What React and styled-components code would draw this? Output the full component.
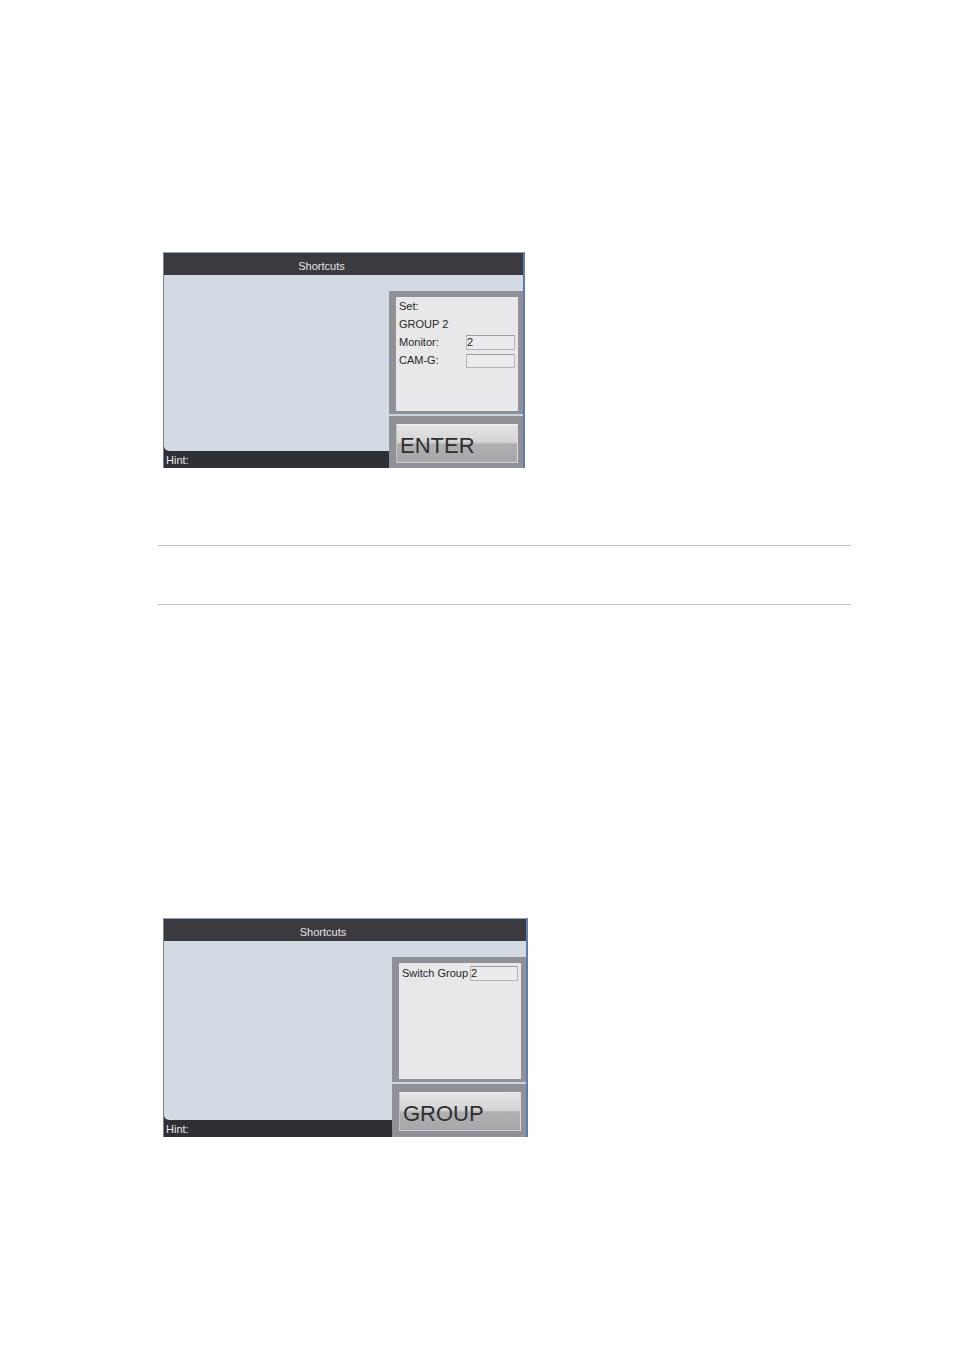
import React from "react";
import styled, { createGlobalStyle } from "styled-components";

const Global = createGlobalStyle`
  html, body { margin: 0; padding: 0; background: #ffffff; }
  body { font-family: "Liberation Sans", Arial, sans-serif; }
  * { box-sizing: border-box; }
`;

const Page = styled.div`
  width: 954px;
  min-height: 1349px;
  padding-top: 252px;
  display: flex;
  flex-direction: column;
`;

const Screen = styled.div`
  margin-left: 163px;
  width: ${(p) => p.$w}px;
  display: flex;
  flex-direction: column;
  border-top: 1px solid #8ea2bf;
  border-right: 2px solid #5d7cb4;
  border-left: 1px solid #7b8595;
  margin-top: ${(p) => p.$mt || 0}px;
`;

const TitleBar = styled.div`
  height: 22px;
  padding: 4px 44px 0 0;
  line-height: 18px;
  background: #3b3b3f;
  color: #e4e4e6;
  font-size: 11px;
  text-align: center;
`;

const Main = styled.div`
  height: ${(p) => p.$h}px;
  display: flex;
  background: #d2dbe3;
`;

const LeftCol = styled.div`
  flex: 1;
  display: flex;
  flex-direction: column;
  background: #2f3035;
`;

const Body = styled.div`
  flex: 1;
  background: #d2dbe3;
  border-bottom-left-radius: 5px;
`;

const HintBar = styled.div`
  height: 17px;
  padding: 2px 0 0 2px;
  line-height: 15px;
  color: #e8e8ea;
  font-size: 11px;
`;

const RightCol = styled.div`
  width: 134px;
  padding-top: 16px;
  display: flex;
  flex-direction: column;
`;

const Frame = styled.div`
  flex: 1;
  background: #909196;
  padding: 6px 5px 3px 7px;
  display: flex;
  flex-direction: column;
`;

const InfoPanel = styled.div`
  flex: 1;
  background: #e8e7e9;
  padding: ${(p) => p.$pt}px 3px 0 3px;
  color: #262626;
  font-size: 11px;
`;

const Row = styled.div`
  height: 18px;
  line-height: 18px;
  display: flex;
  align-items: center;
  white-space: nowrap;
`;

const Label = styled.span`
  width: ${(p) => (p.$w ? `${p.$w}px` : "auto")};
  flex: none;
`;

const Field = styled.div`
  width: ${(p) => p.$w}px;
  height: ${(p) => p.$h || 14}px;
  margin-top: ${(p) => p.$mt || 0}px;
  border: 1px solid #b4b4b6;
  border-top-color: #9c9c9e;
  background: #ebeaec;
  line-height: 12px;
  font-size: 11px;
  color: #222;
`;

const Separator = styled.div`
  height: 2px;
  background: #c8d5de;
`;

const ButtonFrame = styled.div`
  background: #909196;
  padding: 8px 5px ${(p) => p.$pb}px 7px;
`;

const BigButton = styled.div`
  height: 39px;
  padding: 10px 0 0 3px;
  line-height: 22px;
  font-size: 22px;
  color: #2e2e30;
  background: linear-gradient(
    #e6e6e7 0%,
    #d4d4d5 46%,
    #b0b0b2 52%,
    #a7a7a9 100%
  );
  border-top: 1px solid #ededee;
  border-right: 1px solid #dcdcde;
  border-bottom: 1px solid #d0d0d2;
  border-left: 1px solid #c2c2c4;
`;

const Divider = styled.div`
  margin: ${(p) => p.$mt}px 0 0 158px;
  width: 693px;
  height: 1px;
  background: #c2c2c2;
`;

function ShortcutScreen({ w, h, mt, panelPt, pb, children, button }) {
  return (
    <Screen $w={w} $mt={mt}>
      <TitleBar>Shortcuts</TitleBar>
      <Main $h={h}>
        <LeftCol>
          <Body />
          <HintBar>Hint:</HintBar>
        </LeftCol>
        <RightCol>
          <Frame>
            <InfoPanel $pt={panelPt}>{children}</InfoPanel>
          </Frame>
          <Separator />
          <ButtonFrame $pb={pb}>
            <BigButton>{button}</BigButton>
          </ButtonFrame>
        </RightCol>
      </Main>
    </Screen>
  );
}

export default function App() {
  return (
    <>
      <Global />
      <Page>
        <ShortcutScreen w={362} h={193} panelPt={0} pb={5} button="ENTER">
          <Row>Set:</Row>
          <Row>GROUP 2</Row>
          <Row>
            <Label $w={67}>Monitor:</Label>
            <Field $w={49} $h={15}>2</Field>
          </Row>
          <Row>
            <Label $w={67}>CAM-G:</Label>
            <Field $w={49} $h={14} $mt={2} />
          </Row>
        </ShortcutScreen>

        <Divider $mt={77} />
        <Divider $mt={58} />

        <ShortcutScreen
          w={365}
          h={196}
          mt={313}
          panelPt={1}
          pb={6}
          button="GROUP"
        >
          <Row>
            <Label $w={68}>Switch Group</Label>
            <Field $w={50} $h={15} $mt={1}>2</Field>
          </Row>
        </ShortcutScreen>
      </Page>
    </>
  );
}
